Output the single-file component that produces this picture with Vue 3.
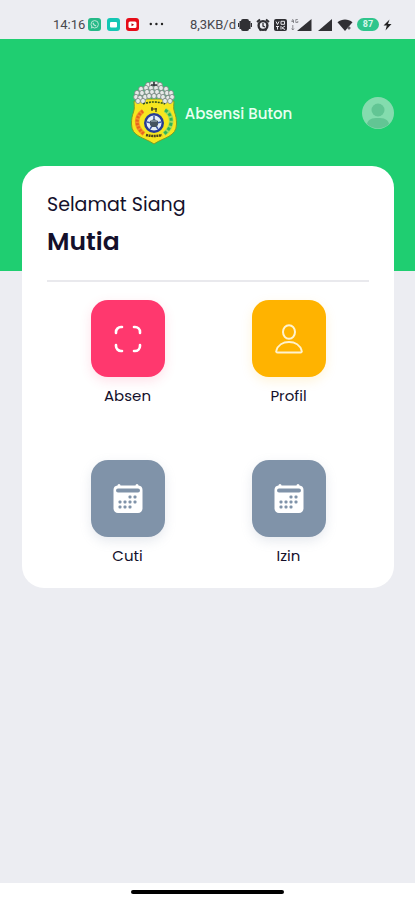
<script setup>
import { ref } from 'vue'

const nama = ref('Mutia')
const baterai = ref(87)

const menus = [
  { judul: 'Absen', ikon: 'scan', warna: 'merah' },
  { judul: 'Profil', ikon: 'user', warna: 'kuning' },
  { judul: 'Cuti', ikon: 'kalender', warna: 'abu' },
  { judul: 'Izin', ikon: 'kalender', warna: 'abu' },
]

// titik tanggal di ikon kalender
const titik = [
  [17, 13], [22, 13],
  [7, 18], [12, 18], [17, 18], [22, 18],
  [7, 23], [12, 23], [17, 23],
]

// kubah di atas logo
const kubah = [
  [17, 4], [21, 3], [25, 3], [29, 4],
  [10, 8], [15, 7], [20, 7], [25, 7], [30, 7], [35, 8],
  [6, 12], [11, 12], [16, 11], [21, 11], [26, 11], [31, 12], [36, 12], [40, 12],
  [5, 16], [9, 17], [14, 16], [18, 15], [23, 15], [28, 15], [32, 16], [37, 17], [41, 16],
  [7, 20], [12, 20], [34, 20], [39, 20],
]
</script>

<template>
  <div class="layar">
    <div class="status">
      <div class="kiri">
        <span class="jam">14:16</span>
        <svg width="13" height="13" viewBox="0 0 13 13">
          <rect width="13" height="13" rx="3" fill="#25b987" />
          <circle cx="6.7" cy="6.3" r="3.7" fill="none" stroke="#b5e6d4" stroke-width="1" />
          <path d="M2.7 10.5l.7-2.2 1.5 1.6z" fill="#b5e6d4" />
          <path d="M5.2 4.8c0 1.7 1.2 2.9 3 3" fill="none" stroke="#b5e6d4" stroke-width="1.2" />
        </svg>
        <svg width="13" height="13" viewBox="0 0 13 13">
          <rect width="13" height="13" rx="3" fill="#13c7b4" />
          <rect x="3" y="4" width="7" height="5.5" rx="1" fill="#fff" />
        </svg>
        <svg width="13" height="13" viewBox="0 0 13 13">
          <rect width="13" height="13" rx="3" fill="#e60c18" />
          <rect x="2.5" y="3.5" width="8" height="6.5" rx="1.5" fill="#fff" />
          <path d="M5.5 5.2v3l2.6-1.5z" fill="#b00812" />
        </svg>
        <svg class="lainnya" width="15" height="13" viewBox="0 0 15 13" fill="#222">
          <circle cx="1.8" cy="6" r="1.2" />
          <circle cx="7.4" cy="6" r="1.2" />
          <circle cx="13" cy="6" r="1.2" />
        </svg>
      </div>
      <div class="kanan">
        <span class="kecepatan">8,3KB/d</span>
        <svg width="14" height="14" viewBox="0 0 14 14" fill="#303034">
          <rect x="3" y="1" width="8" height="12" rx="2" />
          <rect x="1.5" y="3" width="2" height="8" />
          <rect x="10.500" y="3" width="2" height="8" />
          <rect x="0" y="5" width="1.2" height="4" />
          <rect x="12.8" y="5" width="1.2" height="4" />
        </svg>
        <svg width="14" height="14" viewBox="0 0 14 14">
          <circle cx="7" cy="7.5" r="4.4" fill="none" stroke="#303034" stroke-width="2.4" />
          <path d="M1 4l3-2.5M13 4l-3-2.5M3.5 12.5l1-1M10.5 12.5l-1-1" stroke="#303034" stroke-width="2" />
          <path d="M7 5v3l2 1" fill="none" stroke="#303034" stroke-width="1.3" />
        </svg>
        <svg width="13" height="14" viewBox="0 0 13 14">
          <rect y="1" width="13" height="12" rx="2" fill="#303034" />
          <path d="M2 3.5l1.5 3 1.5-3M7 3.3h3.5v3H7zM2 8.5h3M3.5 8.5v3M7 8v3.5M11 8L8 10l3 1.5" fill="none" stroke="#e8e8ec" stroke-width="1" />
        </svg>
        <svg width="22" height="14" viewBox="0 0 22 14">
          <path d="M2 1L.7 3.5H3M2.5 2v3M6.8 1.5H4.8v3h2V3M1.8 7v5M.6 10.5L1.8 12 3 10.5" fill="none" stroke="#77777c" stroke-width=".8" />
          <path d="M20.5 1v12H6z" fill="#303034" />
        </svg>
        <svg width="16" height="14" viewBox="0 0 16 14">
          <path d="M15 1v12H1z" fill="#303034" />
        </svg>
        <svg width="16" height="14" viewBox="0 0 16 14">
          <path d="M.5 4.2C5 .7 11 .7 15.5 4.2L8 13z" fill="#303034" />
          <path d="M10.500 10h3M12 8.500v3" stroke="#5a5a5f" stroke-width="1.5" />
        </svg>
        <span class="baterai">{{ baterai }}</span>
        <svg width="9" height="12" viewBox="0 0 9 12">
          <path d="M6.5.5L.5 6.500h3.300L2.500 11.500 8.500 5H5z" fill="#222" />
        </svg>
      </div>
    </div>

    <header>
      <div class="merek">
        <svg width="46" height="64" viewBox="0 0 46 64" role="img" aria-label="Logo Buton">
          <path d="M3 20C7 21 9 18 12 18h22c3 0 5 3 9 2 0 4-1 7 .5 11S45.500 38 45.500 43C45.500 56 33 56 23 63 13 56 .5 56 .5 43c0-5 .5-8 2-12S3 24 3 20z" fill="#f6e61f" stroke="#7d9c26" stroke-width="1" />
          <g stroke="#7c8482" stroke-width=".8" fill="#e6ebe8">
            <ellipse v-for="(k, i) in kubah" :key="i" :cx="k[0]" :cy="k[1]" rx="2.4" ry="2.6" />
          </g>
          <path d="M20 4h6M23 1v4" stroke="#30363a" stroke-width="1.500" />
          <path d="M12 23q11-4 22 0" fill="none" stroke="#31531c" stroke-width="1.600" stroke-dasharray="2 1" />
          <path d="M20 28h6M21 26v4M25 27v4" stroke="#2f3020" stroke-width="1.200" />
          <path d="M12 30C5 35 3 45 13 53" fill="none" stroke="#f4922a" stroke-width="4.500" />
          <path d="M12 30C5 35 3 45 13 53" fill="none" stroke="#e8641d" stroke-width="3" stroke-dasharray="2 1.500" />
          <path d="M34 29C42 34 43 45 33 53" fill="none" stroke="#9edc62" stroke-width="4.500" />
          <path d="M34 29C42 34 43 45 33 53" fill="none" stroke="#2fb457" stroke-width="3" stroke-dasharray="3 2" />
          <circle cx="23" cy="42" r="10" fill="#263c94" />
          <circle cx="23" cy="42" r="7.500" fill="#e4eef5" />
          <path d="M23 35v4M16 41l4 1M30 41l-4 1M19 48l2-3M27 48l-2-3" stroke="#3d57a4" stroke-width="1.500" />
          <path d="M19 40l4-2 4 2v4l-2 2h-4l-2-2z" fill="#45545f" />
          <path d="M20 40h6" stroke="#a9bcc5" stroke-width="1" />
          <path d="M15 54q8 2 16 0" fill="none" stroke="#4a421e" stroke-width="2.400" stroke-dasharray="2 .6" />
        </svg>
        <span>Absensi Buton</span>
      </div>
      <button class="avatar" type="button" aria-label="Akun">
        <svg width="32" height="32" viewBox="0 0 32 32">
          <circle cx="16" cy="16" r="16" fill="#84dcae" />
          <circle cx="16" cy="13" r="6.500" fill="#62c594" />
          <path d="M5 27c1-5 5-6 11-6s10 1 11 6a16 16 0 0 1-22 0z" fill="#62c594" />
        </svg>
      </button>
    </header>

    <main>
      <section class="kartu">
        <div class="salam">
          <p>Selamat Siang</p>
          <h1>{{ nama }}</h1>
        </div>
        <nav class="menu">
          <a v-for="menu in menus" :key="menu.judul" href="#">
            <span class="kotak" :class="menu.warna">
              <svg v-if="menu.ikon === 'scan'" width="28" height="28" viewBox="0 0 28 28" fill="none" stroke="#fff" stroke-width="2.600" stroke-linecap="round">
                <path d="M2 8V7a5 5 0 0 1 5-5h1M20 2h1a5 5 0 0 1 5 5v1M26 20v1a5 5 0 0 1-5 5h-1M8 26H7a5 5 0 0 1-5-5v-1" />
              </svg>
              <svg v-else-if="menu.ikon === 'user'" width="28" height="30" viewBox="0 0 28 30" fill="none" stroke="#fff3cf" stroke-width="2" stroke-linejoin="round">
                <ellipse cx="14" cy="8" rx="6" ry="6.800" />
                <path d="M2.500 28.500C1.500 28.500 1 27.800 1.300 26.800 2.800 21 8 18 14 18s11.200 3 12.700 8.800c.3 1-.2 1.700-1.200 1.700z" />
              </svg>
              <svg v-else width="30" height="30" viewBox="0 0 30 30">
                <path d="M6 0a1.500 1.500 0 0 1 1.500 1.500h15a1.500 1.500 0 0 1 3 0A4.500 4.500 0 0 1 29.500 6v18.500A4.500 4.500 0 0 1 25 29H5a4.500 4.500 0 0 1-4.500-4.500V6A4.500 4.500 0 0 1 4.500 1.500 1.500 1.500 0 0 1 6 0z" fill="#fff" />
                <rect x="3" y="4.500" width="24" height="4" rx="2" fill="#8093a9" />
                <rect v-for="(t, i) in titik" :key="i" :x="t[0] - 1.5" :y="t[1] - 1.5" width="3" height="3" rx="1" fill="#8093a9" />
              </svg>
            </span>
            <span class="judul">{{ menu.judul }}</span>
          </a>
        </nav>
      </section>
    </main>

    <div class="navigasi">
      <span></span>
    </div>
  </div>
</template>

<style>
body {
  margin: 0;
}
</style>

<style scoped>
.layar {
  display: flex;
  flex-direction: column;
  min-height: 100vh;
  background: #ecedf2;
  color: #14102b;
  font-family: Poppins, Inter, sans-serif;
}

/* bar status */
.status {
  display: flex;
  justify-content: space-between;
  align-items: center;
  box-sizing: border-box;
  height: 39px;
  padding: 10px 23px 0 53px;
  font-family: Roboto, sans-serif;
  font-size: 13px;
  color: #48484d;
}
.kiri {
  display: flex;
  align-items: center;
  gap: 6px;
}
.jam {
  margin-right: -3px;
}
.lainnya {
  margin-left: 4px;
}
.kanan {
  display: flex;
  align-items: center;
  gap: 4px;
}
.kecepatan {
  margin-right: -2px;
}
.baterai {
  width: 22px;
  border-radius: 7px;
  background: #2fc58c;
  color: #d9f6ea;
  font-size: 9px;
  font-weight: 700;
  line-height: 13px;
  text-align: center;
}

/* header */
header {
  display: grid;
  grid-template-columns: 1fr auto 1fr;
  align-items: center;
  box-sizing: border-box;
  height: 232px;
  padding: 0 21px 84px 29px;
  background: #1fce71;
}
.merek {
  grid-column: 2;
  display: flex;
  align-items: center;
  gap: 8px;
  color: #e9fff2;
  font-size: 15px;
  font-weight: 500;
}
.avatar {
  justify-self: end;
  padding: 0;
  border: 0;
  background: none;
}
.avatar svg {
  display: block;
}

/* kartu menu */
main {
  flex: 1;
  margin-top: -105px;
  padding: 0 21px 24px 22px;
}
.kartu {
  padding: 24px 25px 22px;
  border-radius: 22px;
  background: #fff;
}
.salam {
  padding-bottom: 18px;
  border-bottom: 2px solid #e9e9ed;
}
.salam p {
  margin: 0;
  font-size: 19px;
  line-height: 30px;
}
.salam h1 {
  margin: 0;
  padding-top: 2px;
  font-size: 25px;
  font-weight: 600;
  line-height: 40px;
}
.menu {
  display: grid;
  grid-template-columns: 1fr 1fr;
  row-gap: 54px;
  padding-top: 18px;
}
.menu a {
  display: flex;
  flex-direction: column;
  align-items: center;
  gap: 9px;
  color: inherit;
  text-decoration: none;
}
.kotak {
  display: flex;
  align-items: center;
  justify-content: center;
  width: 74px;
  height: 77px;
  border-radius: 17px;
}
.merah {
  background: #ff386e;
  box-shadow: 0 4px 12px #ff386e26;
}
.kuning {
  background: #ffb300;
  box-shadow: 0 4px 12px #ffb30026;
}
.abu {
  background: #8093a9;
  box-shadow: 0 4px 12px #8093a933;
}
.judul {
  font-size: 15px;
  line-height: 20px;
}

/* navigasi bawah */
.navigasi {
  display: flex;
  justify-content: center;
  align-items: center;
  height: 17px;
  background: #fff;
}
.navigasi span {
  width: 37%;
  height: 4px;
  border-radius: 2px;
  background: #000;
}
</style>
